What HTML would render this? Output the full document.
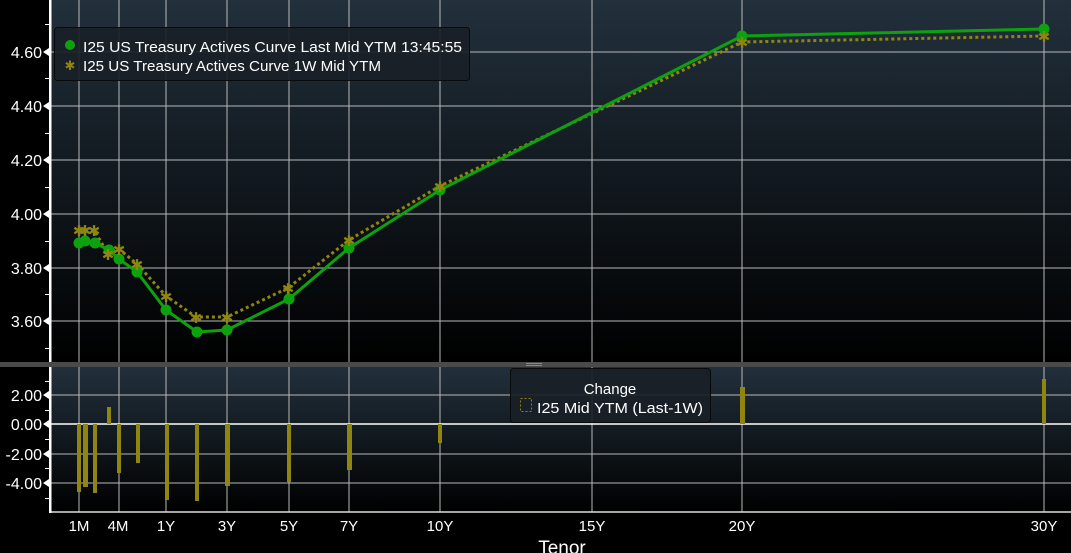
<!DOCTYPE html>
<html><head><meta charset="utf-8"><style>
html,body{margin:0;padding:0;background:#000;}
svg{display:block;font-family:"Liberation Sans",sans-serif;}
</style></head><body>
<svg width="1071" height="553" viewBox="0 0 1071 553" xmlns="http://www.w3.org/2000/svg">
<defs>
<linearGradient id="g1" x1="0" y1="0" x2="0" y2="1"><stop offset="0" stop-color="#22303c"/><stop offset="1" stop-color="#000"/></linearGradient>
<linearGradient id="g2" x1="0" y1="0" x2="0" y2="1"><stop offset="0" stop-color="#22303c"/><stop offset="1" stop-color="#000"/></linearGradient>
</defs>
<rect x="0" y="0" width="1071" height="553" fill="#000"/>
<rect x="50" y="0" width="1021" height="362" fill="url(#g1)"/>
<rect x="50" y="366" width="1021" height="146" fill="url(#g2)"/>
<rect x="0" y="362" width="1071" height="5" fill="#4a4a4a"/>
<g stroke="#b8b8b8" stroke-width="1">
<line x1="79" y1="0" x2="79" y2="362"/><line x1="119" y1="0" x2="119" y2="362"/><line x1="166" y1="0" x2="166" y2="362"/><line x1="227" y1="0" x2="227" y2="362"/><line x1="289" y1="0" x2="289" y2="362"/><line x1="349" y1="0" x2="349" y2="362"/><line x1="440" y1="0" x2="440" y2="362"/><line x1="592" y1="0" x2="592" y2="362"/><line x1="742" y1="0" x2="742" y2="362"/><line x1="1044" y1="0" x2="1044" y2="362"/>
<line x1="79" y1="367" x2="79" y2="512"/><line x1="119" y1="367" x2="119" y2="512"/><line x1="166" y1="367" x2="166" y2="512"/><line x1="227" y1="367" x2="227" y2="512"/><line x1="289" y1="367" x2="289" y2="512"/><line x1="349" y1="367" x2="349" y2="512"/><line x1="440" y1="367" x2="440" y2="512"/><line x1="592" y1="367" x2="592" y2="512"/><line x1="742" y1="367" x2="742" y2="512"/><line x1="1044" y1="367" x2="1044" y2="512"/>
<line x1="50" y1="52" x2="1071" y2="52"/><line x1="50" y1="106" x2="1071" y2="106"/><line x1="50" y1="160" x2="1071" y2="160"/><line x1="50" y1="214" x2="1071" y2="214"/><line x1="50" y1="268" x2="1071" y2="268"/><line x1="50" y1="321" x2="1071" y2="321"/>
<line x1="50" y1="395" x2="1071" y2="395"/><line x1="50" y1="454" x2="1071" y2="454"/><line x1="50" y1="483" x2="1071" y2="483"/>
</g>
<line x1="50" y1="424" x2="1071" y2="424" stroke="#fff" stroke-width="1.5"/>
<line x1="50" y1="512" x2="1071" y2="512" stroke="#ddd" stroke-width="1.5"/>
<rect x="49" y="0" width="2.5" height="362" fill="#fff"/>
<rect x="49" y="367" width="2.5" height="146" fill="#fff"/>
<g fill="#fff">
<path d="M49 48 l-6 4 l6 4z"/><path d="M49 102 l-6 4 l6 4z"/><path d="M49 156 l-6 4 l6 4z"/><path d="M49 210 l-6 4 l6 4z"/><path d="M49 264 l-6 4 l6 4z"/><path d="M49 317 l-6 4 l6 4z"/>
<path d="M49 391 l-6 4 l6 4z"/><path d="M49 420 l-6 4 l6 4z"/><path d="M49 450 l-6 4 l6 4z"/><path d="M49 479 l-6 4 l6 4z"/>
<rect x="45" y="24" width="4" height="1"/><rect x="45" y="78" width="4" height="1"/><rect x="45" y="133" width="4" height="1"/><rect x="45" y="187" width="4" height="1"/><rect x="45" y="241" width="4" height="1"/><rect x="45" y="294" width="4" height="1"/><rect x="45" y="348" width="4" height="1"/>
<rect x="45" y="381" width="4" height="1"/><rect x="45" y="410" width="4" height="1"/><rect x="45" y="439" width="4" height="1"/><rect x="45" y="468" width="4" height="1"/><rect x="45" y="498" width="4" height="1"/>
</g>
<g fill="#fff" font-size="16" text-anchor="end">
<text x="42" y="58">4.60</text><text x="42" y="112">4.40</text><text x="42" y="166">4.20</text><text x="42" y="220">4.00</text><text x="42" y="274">3.80</text><text x="42" y="327">3.60</text>
<text x="42" y="401">2.00</text><text x="42" y="430">0.00</text><text x="42" y="460">-2.00</text><text x="42" y="489">-4.00</text>
</g>
<g fill="#fff" font-size="15" text-anchor="middle">
<text x="79" y="531">1M</text><text x="118" y="531">4M</text><text x="166" y="531">1Y</text><text x="227" y="531">3Y</text><text x="289" y="531">5Y</text><text x="349" y="531">7Y</text><text x="440" y="531">10Y</text><text x="592" y="531">15Y</text><text x="742" y="531">20Y</text><text x="1044" y="531">30Y</text>
<text x="562" y="554" font-size="19">Tenor</text>
</g>
<g fill="#8f8510">
<rect x="77" y="424" width="4" height="68"/><rect x="83" y="424" width="5" height="63"/><rect x="93" y="424" width="4" height="69"/><rect x="107" y="407" width="4" height="17"/><rect x="117" y="424" width="4" height="49"/><rect x="136" y="424" width="4" height="39"/><rect x="165" y="424" width="4" height="76"/><rect x="195" y="424" width="4" height="77"/><rect x="225" y="424" width="5" height="62"/><rect x="287" y="424" width="4" height="58"/><rect x="347" y="424" width="5" height="46"/><rect x="438" y="424" width="4" height="19"/><rect x="740" y="387" width="5" height="37"/><rect x="1042" y="379" width="4" height="45"/>
</g>
<polyline fill="none" stroke="#8f8510" stroke-width="3" stroke-dasharray="3,3" points="79,230 85,230 94,230 108,254 119,249 137,264 166,296 196,317 227,317 288,288 349,240 440,186 742,42 1044,36"/>
<polyline fill="none" stroke="#0da20d" stroke-width="3" points="79,243 85,241 95,243 109,250 119,259 137,272 166,310 197,332 227,330 289,299 349,248 440,190 742,36 1044,29"/>
<g fill="#0da20d">
<circle cx="79" cy="243" r="5.5"/><circle cx="85" cy="241" r="5.5"/><circle cx="95" cy="243" r="5.5"/><circle cx="109" cy="250" r="5.5"/><circle cx="119" cy="259" r="5.5"/><circle cx="137" cy="272" r="5.5"/><circle cx="166" cy="310" r="5.5"/><circle cx="197" cy="332" r="5.5"/><circle cx="227" cy="330" r="5.5"/><circle cx="289" cy="299" r="5.5"/><circle cx="349" cy="248" r="5.5"/><circle cx="440" cy="190" r="5.5"/><circle cx="742" cy="36" r="5.5"/><circle cx="1044" cy="29" r="5.5"/>
</g>
<g fill="#8f8510" font-size="15" text-anchor="middle">
<text x="79" y="236">✱</text><text x="85" y="236">✱</text><text x="94" y="236">✱</text><text x="108" y="260">✱</text><text x="119" y="255">✱</text><text x="137" y="270">✱</text><text x="166" y="302">✱</text><text x="196" y="323">✱</text><text x="227" y="323">✱</text><text x="288" y="294">✱</text><text x="349" y="246">✱</text><text x="440" y="192">✱</text><text x="742" y="48">✱</text><text x="1044" y="42">✱</text>
</g>
<rect x="54.5" y="27.5" width="415" height="53" rx="3" fill="#1a2027" fill-opacity="0.92" stroke="#0a0a0a"/>
<circle cx="70" cy="45" r="5" fill="#0da20d"/>
<text x="70" y="70" fill="#8f8510" font-size="13" text-anchor="middle">✱</text>
<text x="83" y="52" fill="#fff" font-size="15" textLength="379" lengthAdjust="spacingAndGlyphs">I25 US Treasury Actives Curve Last Mid YTM 13:45:55</text>
<text x="83" y="71" fill="#fff" font-size="15" textLength="298" lengthAdjust="spacingAndGlyphs">I25 US Treasury Actives Curve 1W Mid YTM</text>
<rect x="510.5" y="368.5" width="200" height="54" rx="3" fill="#1a2027" fill-opacity="0.92" stroke="#0a0a0a"/>
<text x="610" y="394" fill="#fff" font-size="15" text-anchor="middle">Change</text>
<rect x="520.5" y="398.5" width="11" height="13" fill="none" stroke="#8f8510" stroke-dasharray="2,2"/>
<text x="537" y="413" fill="#fff" font-size="15" textLength="166" lengthAdjust="spacingAndGlyphs">I25 Mid YTM (Last-1W)</text>
<g stroke="#888"><line x1="526" y1="363.5" x2="542" y2="363.5"/><line x1="526" y1="365.5" x2="542" y2="365.5"/></g>
</svg>
</body></html>
